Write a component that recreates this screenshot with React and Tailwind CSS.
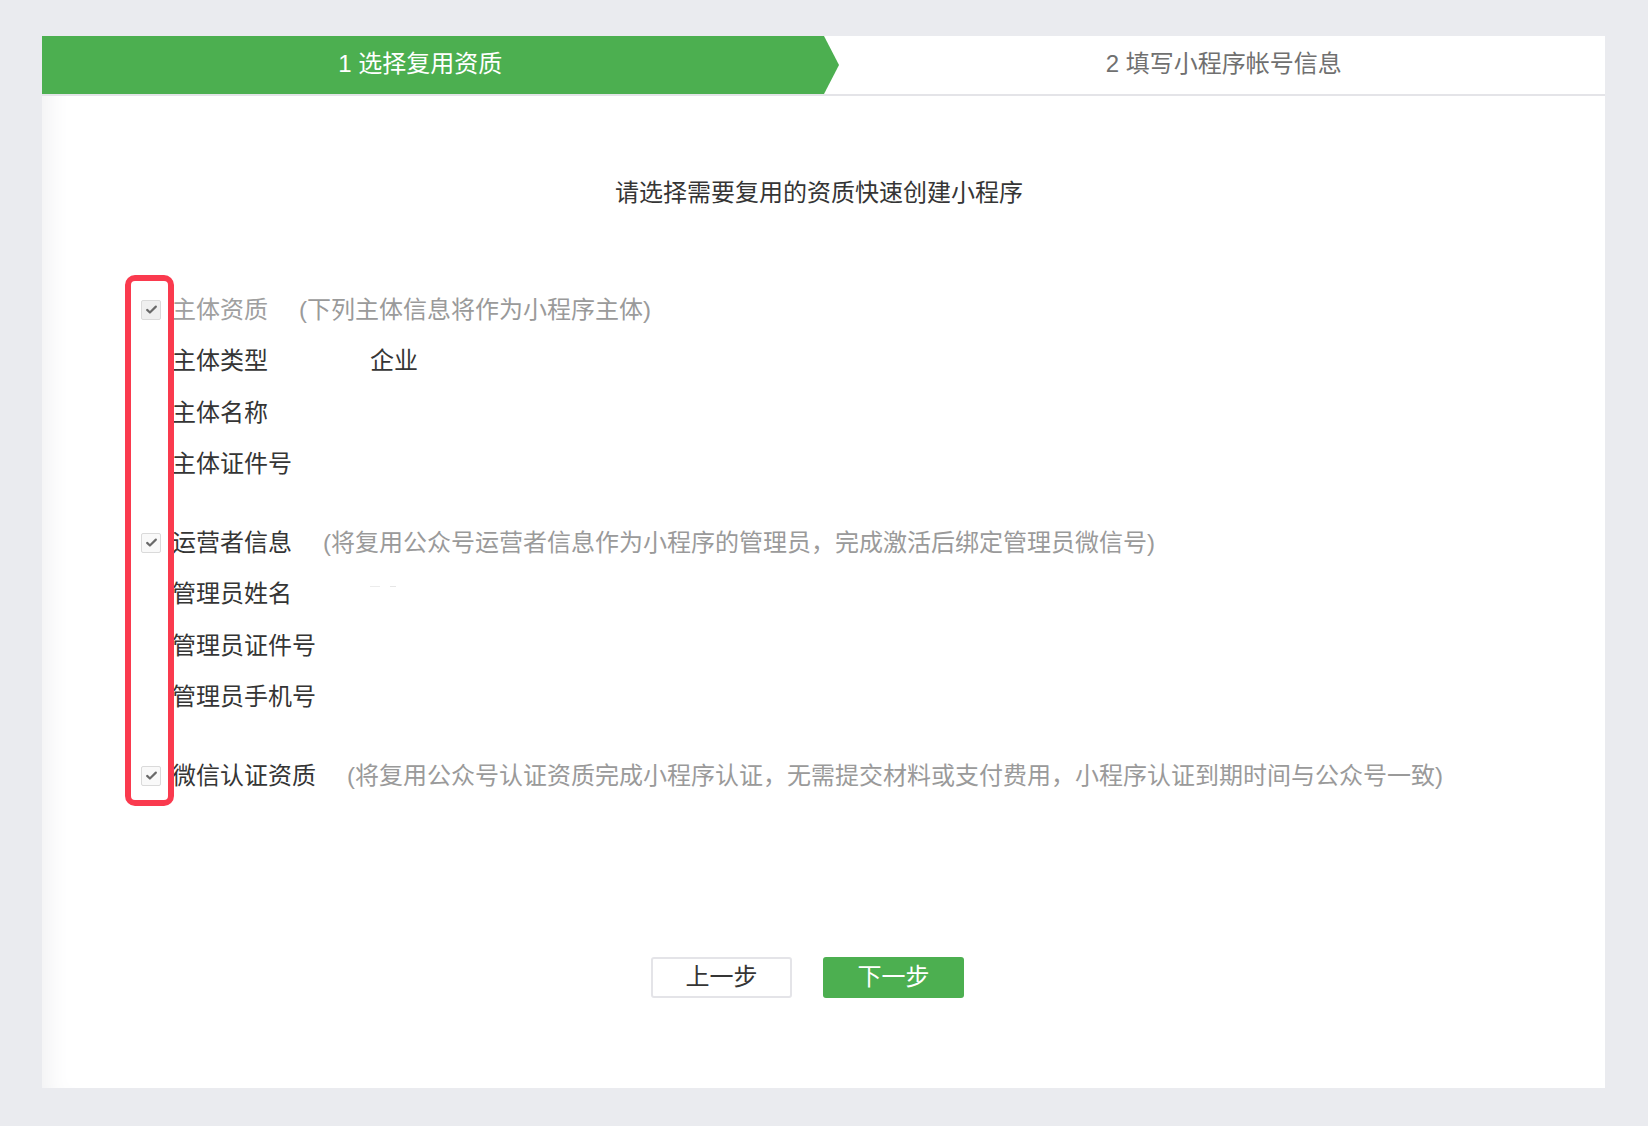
import React from "react";

function Check({ dim }) {
  return (
    <span className={"flex h-[20px] w-[20px] shrink-0 items-center justify-center rounded-[2px] border border-[#dadada] " + (dim ? "bg-[#efefef]" : "bg-[#f9f9f9]")}>
      <svg viewBox="0 0 14 14" className="h-[13px] w-[13px]">
        <path d="M2.3 7.4l3 2.9L11.7 3.9" fill="none" stroke="#6a6a6a" strokeWidth="2.3" strokeLinecap="round" strokeLinejoin="round" />
      </svg>
    </span>
  );
}

function Header({ label, desc, dim }) {
  return (
    <div className="flex h-[51.5px] items-center">
      <Check dim={dim} />
      <span className={"ml-[11px] " + (dim ? "text-[#a0a0a0]" : "text-[#353535]")}>{label}</span>
      <span className="ml-[31px] text-[#9a9a9a]">{desc}</span>
    </div>
  );
}

function Row({ label, value, children }) {
  return (
    <div className="flex h-[51.5px] items-center pl-[31px]">
      <span className="w-[198px] text-[#353535]">{label}</span>
      {value && <span className="text-[#353535]">{value}</span>}
      {children}
    </div>
  );
}

export default function App() {
  return (
    <div className="min-h-screen bg-[#eaebef] pb-[38px] pl-[42px] pr-[43px] pt-[36px] font-['Liberation_Sans','Noto_Sans_CJK_SC',sans-serif] text-[24px]">
      <div className="relative flex h-[1052px] flex-col bg-white shadow-[inset_24px_0_24px_-18px_#f0f0f2]">
        {/* steps */}
        <div className="flex h-[60px] border-b-2 border-[#e4e4e8]">
          <div className="relative flex w-1/2 items-center justify-center bg-[#4caf50] pb-[2px] pr-[25px] text-white">
            <span>1 选择复用资质</span>
            <svg className="absolute right-[-15px] top-0 z-10 h-[58px] w-[15px]" viewBox="0 0 15 58" preserveAspectRatio="none">
              <polygon points="0,0 15,29 0,58" fill="#4caf50" />
            </svg>
          </div>
          <div className="flex w-1/2 items-center justify-center pb-[2px] pl-[19px] text-[#707070]">
            <span>2 填写小程序帐号信息</span>
          </div>
        </div>

        {/* heading */}
        <div className="mt-[79px] pr-[9px] text-center leading-[36px] text-[#353535]">
          请选择需要复用的资质快速创建小程序
        </div>

        {/* sections */}
        <div className="mt-[73px] pl-[99px]">
          <div>
            <Header label="主体资质" desc="(下列主体信息将作为小程序主体)" dim />
            <Row label="主体类型" value="企业" />
            <Row label="主体名称" />
            <Row label="主体证件号" />
          </div>
          <div className="mt-[27px]">
            <Header label="运营者信息" desc="(将复用公众号运营者信息作为小程序的管理员，完成激活后绑定管理员微信号)" />
            <Row label="管理员姓名">
              <span className="flex -translate-y-[8px] items-center gap-[10px]">
                <span className="h-[1px] w-[10px] bg-[#ececec]" />
                <span className="h-[1px] w-[6px] bg-[#e6e6e6]" />
              </span>
            </Row>
            <Row label="管理员证件号" />
            <Row label="管理员手机号" />
          </div>
          <div className="mt-[27px]">
            <Header label="微信认证资质" desc="(将复用公众号认证资质完成小程序认证，无需提交材料或支付费用，小程序认证到期时间与公众号一致)" />
          </div>
        </div>

        {/* buttons */}
        <div className="mt-[155px] flex justify-center gap-[31px] pr-[32px]">
          <button className="h-[41px] w-[141px] rounded-[3px] border-2 border-[#e4e4e8] bg-white text-[#353535]">上一步</button>
          <button className="h-[41px] w-[141px] rounded-[3px] bg-[#4caf50] text-white">下一步</button>
        </div>

        {/* annotation */}
        <div className="pointer-events-none absolute left-[83px] top-[239px] h-[531px] w-[49px] rounded-[10px] border-[6px] border-[#fa3a4e]" />
      </div>
    </div>
  );
}
